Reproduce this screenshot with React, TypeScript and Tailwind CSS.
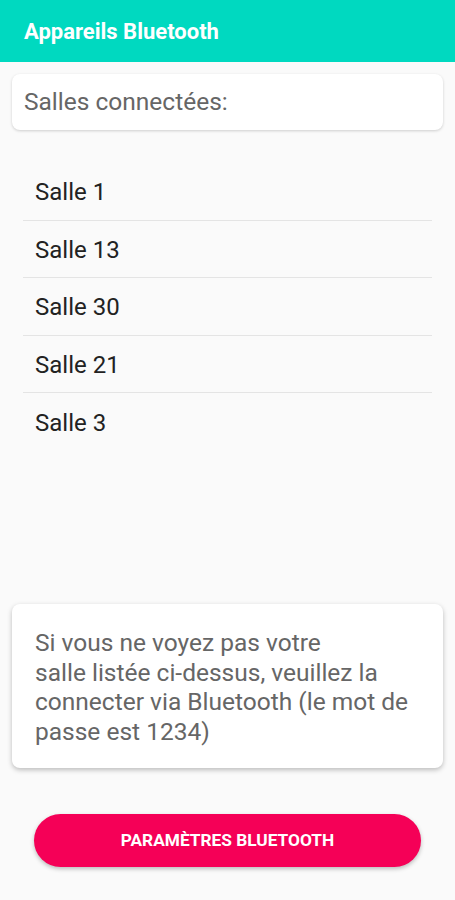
import React from "react";

const rooms = ["Salle 1", "Salle 13", "Salle 30", "Salle 21", "Salle 3"];

export default function App() {
  return (
    <div
      className="w-[455px] h-[900px] bg-[#fafafa] flex flex-col"
      style={{ fontFamily: "Roboto, 'Noto Sans', sans-serif" }}
    >
      <div className="h-[62px] bg-[#00d9c0] flex items-center px-6 shrink-0">
        <span className="text-white font-bold text-[22px] leading-none mt-[2px]">Appareils Bluetooth</span>
      </div>
      <div className="mx-3 mt-3 h-[56px] bg-white rounded-lg shadow-[0_1px_3px_rgba(0,0,0,0.18)] flex items-center px-3 shrink-0">
        <span className="text-[#666] text-[24.5px] leading-none">Salles connectées:</span>
      </div>
      <div className="flex-1 mt-[33px] px-[23px]">
        {rooms.map((r, i) => (
          <div
            key={r}
            className={`h-[57.5px] flex items-center px-3 ${i < rooms.length - 1 ? "border-b border-[#e4e4e4]" : ""}`}
          >
            <span className="text-[#222] text-[24px] leading-none mt-[2px]">{r}</span>
          </div>
        ))}
      </div>
      <div className="mx-3 bg-white rounded-lg shadow-[0_2px_5px_rgba(0,0,0,0.25)] pl-[23px] pr-4 pt-[24px] pb-[22px] shrink-0">
        <p className="text-[#666] text-[24.5px] leading-[29.5px]">
          Si vous ne voyez pas votre
          <br />
          salle listée ci-dessus, veuillez la connecter via Bluetooth (le mot de passe est 1234)
        </p>
      </div>
      <div className="px-[34px] mt-[46px] mb-[33px] shrink-0">
        <button className="w-full h-[53px] rounded-full bg-[#f50057] text-white font-bold text-[17.3px] shadow-[0_2px_4px_rgba(0,0,0,0.25)]">
          PARAMÈTRES BLUETOOTH
        </button>
      </div>
    </div>
  );
}
